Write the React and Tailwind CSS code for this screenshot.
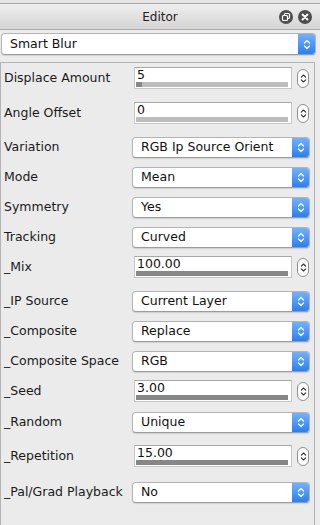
import React from "react";

const rows = [
  { label: "Displace Amount", type: "num", value: "5", fill: 4, mt: "" },
  { label: "Angle Offset", type: "num", value: "0", fill: 0, mt: "mt-[5px]" },
  { label: "Variation", type: "sel", value: "RGB Ip Source Orient", mt: "mt-[4px]" },
  { label: "Mode", type: "sel", value: "Mean", mt: "" },
  { label: "Symmetry", type: "sel", value: "Yes", mt: "" },
  { label: "Tracking", type: "sel", value: "Curved", mt: "" },
  { label: "_Mix", type: "num", value: "100.00", fill: 100, mt: "" },
  { label: "_IP Source", type: "sel", value: "Current Layer", mt: "mt-[4px]" },
  { label: "_Composite", type: "sel", value: "Replace", mt: "" },
  { label: "_Composite Space", type: "sel", value: "RGB", mt: "" },
  { label: "_Seed", type: "num", value: "3.00", fill: 100, mt: "" },
  { label: "_Random", type: "sel", value: "Unique", mt: "mt-[1px]" },
  { label: "_Repetition", type: "num", value: "15.00", fill: 100, mt: "mt-[4px]" },
  { label: "_Pal/Grad Playback", type: "sel", value: "No", mt: "mt-[6px]" },
];

// up/down chevrons used on the popups and spinners
const Chevrons = ({ color, w = 8, h = 13 }) => (
  <svg width={w} height={h} viewBox="0 0 8 13" fill="none">
    <path d="M1.5 5 L4 2.5 L6.5 5" stroke={color} strokeWidth="1.3" strokeLinecap="round" strokeLinejoin="round" />
    <path d="M1.5 8 L4 10.5 L6.5 8" stroke={color} strokeWidth="1.3" strokeLinecap="round" strokeLinejoin="round" />
  </svg>
);

const NumberField = ({ value, fill }) => (
  <div className="flex items-center ml-[2px]">
    <div className="flex flex-col w-[158px] h-[22px] bg-white border border-[#c6c6c6] border-t-[#a8a8a8]">
      <div className="h-[13px] leading-[13px] pl-[2px] text-[#111]">{value}</div>
      <div className="mt-[1px] mx-[1px] mr-[3px] h-[5px] bg-[#bdbdbd] flex">
        <div className="h-full bg-[#878787]" style={{ width: `${fill}%` }} />
      </div>
    </div>
    <div className="ml-[5px] w-[12px] h-[19px] rounded-[6px] border border-[#8e8e8e] bg-white flex items-center justify-center">
      <Chevrons color="#333" w={7} h={13} />
    </div>
  </div>
);

const Popup = ({ value, width = "w-[178px]", h = "h-[21px]" }) => (
  <div className={`flex ${width} ${h} rounded-[4px] border border-[#b4b4b4] border-b-[#9c9c9c] bg-white shadow-[0_1px_1px_rgba(0,0,0,0.12)] overflow-hidden`}>
    <div className="flex-1 pl-[8px] flex items-center text-[#111] whitespace-nowrap">{value}</div>
    <div className="w-[17px] flex items-center justify-center bg-gradient-to-b from-[#6fb2ff] to-[#2a7ef2]">
      <Chevrons color="#fff" />
    </div>
  </div>
);

export default function App() {
  return (
    <div className="w-[320px] h-[525px] overflow-hidden flex flex-col bg-[#ececec] text-[12.5px] text-[#1a1a1a] font-['DejaVu_Sans',sans-serif]">
      {/* title bar */}
      <div className="h-[3px] bg-[#e4e4e4]" />
      <div className="h-[27px] flex items-center border-y border-[#a9a9a9] bg-gradient-to-b from-[#efefef] to-[#d4d4d4]">
        <div className="w-[41px]" />
        <div className="flex-1 text-center text-[12px] text-[#222]">Editor</div>
        <div className="w-[41px] flex items-center gap-[5px]">
          <div className="w-[14px] h-[14px] rounded-full bg-[#4e4e4e] flex items-center justify-center">
            <svg width="10" height="10" viewBox="0 0 10 10" fill="none">
              <rect x="3.5" y="1.5" width="5" height="5" rx="1" stroke="#fff" strokeWidth="1.2" />
              <rect x="1.5" y="3.5" width="5" height="5" rx="1" stroke="#fff" strokeWidth="1.2" fill="#4e4e4e" />
            </svg>
          </div>
          <div className="w-[14px] h-[14px] rounded-full bg-[#4e4e4e] flex items-center justify-center">
            <svg width="8" height="8" viewBox="0 0 8 8">
              <path d="M1.5 1.5 L6.5 6.5 M6.5 1.5 L1.5 6.5" stroke="#fff" strokeWidth="1.8" strokeLinecap="round" />
            </svg>
          </div>
        </div>
      </div>

      {/* effect chooser */}
      <div className="mt-[3px] pl-[1px]">
        <Popup value="Smart Blur" width="w-[315px]" h="h-[22px]" />
      </div>

      {/* parameter panel */}
      <div className="mt-[7px] w-[315px] flex-1 border-t border-x border-[#b3b3b3] bg-[#ebebeb]">
        {rows.map((r) => (
          <div key={r.label} className={`flex items-center h-[30px] ${r.mt}`}>
            <div className="w-[131px] pl-[3px] whitespace-nowrap">{r.label}</div>
            {r.type === "num" ? <NumberField value={r.value} fill={r.fill} /> : <Popup value={r.value} />}
          </div>
        ))}
      </div>
    </div>
  );
}
